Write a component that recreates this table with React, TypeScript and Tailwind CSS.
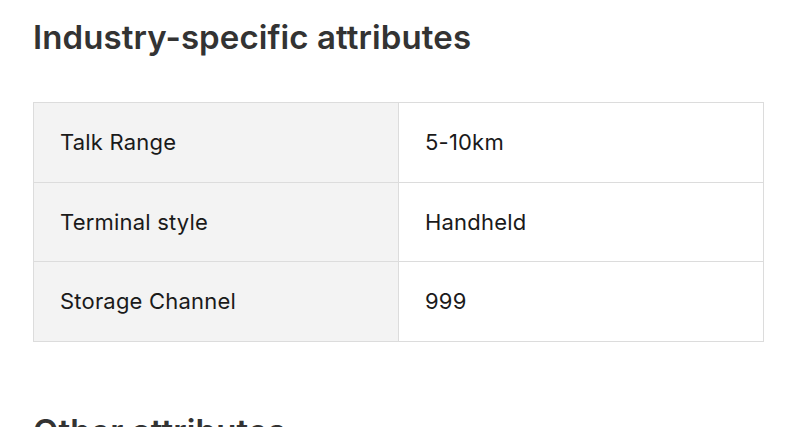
export default function App() {
    const rows = [
        { label: 'Talk Range', value: '5-10km' },
        { label: 'Terminal style', value: 'Handheld' },
        { label: 'Storage Channel', value: '999' },
    ];

    return (
        <div className="min-h-screen bg-white px-[33px] pt-[17px] font-['Inter',sans-serif] overflow-hidden">
            <h2 className="text-[33px] leading-[40px] font-semibold text-[#333] tracking-[0.1px]">
                Industry-specific attributes
            </h2>

            {/* attributes table */}
            <div className="mt-[45px] w-[731px] border-t border-l border-[#dcdcdc]">
                {rows.map((row) => (
                    <div key={row.label} className="grid grid-cols-[365px_1fr] h-[79.7px]">
                        <div className="flex items-center pl-[26px] bg-[#f3f3f3] border-r border-b border-[#dcdcdc] text-[22px] tracking-[0.2px] text-[#1a1a1a]">
                            {row.label}
                        </div>
                        <div className="flex items-center pl-[26px] bg-white border-r border-b border-[#dcdcdc] text-[22px] tracking-[0.2px] text-[#1a1a1a]">
                            {row.value}
                        </div>
                    </div>
                ))}
            </div>

            <h2 className="mt-[69px] text-[33px] leading-[40px] font-semibold text-[#333] tracking-[0.1px]">
                Other attributes
            </h2>
        </div>
    );
}
